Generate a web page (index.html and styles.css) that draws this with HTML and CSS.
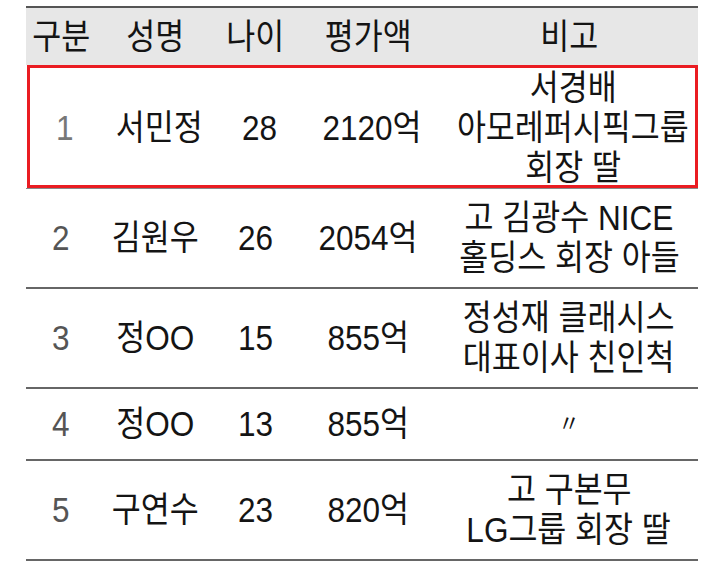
FILE: index.html
```html
<!DOCTYPE html>
<html lang="ko">
<head>
<meta charset="utf-8">
<link rel="stylesheet" href="styles.css">
</head>
<body>
<div class="table">
  <div class="row head">
    <div><span class="t">구분</span></div><div><span class="t">성명</span></div><div><span class="t">나이</span></div><div><span class="t">평가액</span></div><div><span class="t">비고</span></div>
  </div>
  <div class="row r1">
    <div class="no"><span class="t">1</span></div><div><span class="t">서민정</span></div><div><span class="t">28</span></div><div><span class="t">2120억</span></div>
    <div class="note"><span class="t">서경배</span><span class="t">아모레퍼시픽그룹</span><span class="t">회장 딸</span></div>
  </div>
  <div class="row r2">
    <div class="no"><span class="t">2</span></div><div><span class="t">김원우</span></div><div><span class="t">26</span></div><div><span class="t">2054억</span></div>
    <div class="note"><span class="t">고 김광수 NICE</span><span class="t">홀딩스 회장 아들</span></div>
  </div>
  <div class="row r3">
    <div class="no"><span class="t">3</span></div><div><span class="t">정OO</span></div><div><span class="t">15</span></div><div><span class="t">855억</span></div>
    <div class="note"><span class="t">정성재 클래시스</span><span class="t">대표이사 친인척</span></div>
  </div>
  <div class="row r4">
    <div class="no"><span class="t">4</span></div><div><span class="t">정OO</span></div><div><span class="t">13</span></div><div><span class="t">855억</span></div>
    <div class="note"><span class="t ditto">〃</span></div>
  </div>
  <div class="row r5">
    <div class="no"><span class="t">5</span></div><div><span class="t">구연수</span></div><div><span class="t">23</span></div><div><span class="t">820억</span></div>
    <div class="note"><span class="t">고 구본무</span><span class="t">LG그룹 회장 딸</span></div>
  </div>
</div>
</body>
</html>
```

FILE: styles.css
```css
html, body {
  margin: 0;
  padding: 0;
  background: #ffffff;
}

body {
  font-family: "Liberation Sans", "Noto Sans CJK KR", sans-serif;
  font-size: 35px;
  font-weight: 400;
  color: #141414;
}

.table {
  width: 672px;
  margin: 6px 0 0 26px;
}

.row {
  display: grid;
  grid-template-columns: 70px 118px 82px 144px 258px;
  align-items: center;
  text-align: center;
  box-sizing: border-box;
  border-bottom: 2px solid #666666;
  line-height: 40px;
}

.t {
  display: inline-block;
  transform: scaleX(0.9);
  white-space: nowrap;
}

.head {
  height: 59px;
  border-top: 2px solid #555555;
  border-bottom: none;
  background: #e7e7e7;
}

.r1 {
  height: 123px;
  border: 3px solid #ea1c22;
  margin-left: 1px;
}

.r2 {
  height: 101px;
  border-top: 1px solid #8a8a8a;
}

.r3 {
  height: 100px;
}

.r4 {
  height: 72px;
}

.r5 {
  height: 100px;
}

.no {
  color: #555555;
}

.r1 .no {
  color: #777777;
}

.note {
  display: flex;
  flex-direction: column;
  align-items: center;
}

.ditto {
  font-size: 24px;
}
```
